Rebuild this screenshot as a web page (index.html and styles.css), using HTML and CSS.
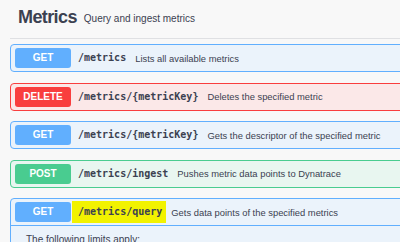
FILE: index.html
```html
<!DOCTYPE html>
<html lang="en">
<head>
  <meta charset="UTF-8" />
  <title>Metrics API</title>
  <link rel="stylesheet" href="styles.css">
</head>
<body>
  <div class="tag">
    <span class="tag-name">Metrics</span>
    <span class="tag-desc">Query and ingest metrics</span>
  </div>

  <div class="ops">
    <div class="op op-get">
      <div class="op-head">
        <span class="method">GET</span>
        <span class="path">/metrics</span>
        <span class="summary">Lists all available metrics</span>
      </div>
    </div>

    <div class="op op-delete">
      <div class="op-head">
        <span class="method">DELETE</span>
        <span class="path">/metrics/{metricKey}</span>
        <span class="summary">Deletes the specified metric</span>
      </div>
    </div>

    <div class="op op-get">
      <div class="op-head">
        <span class="method">GET</span>
        <span class="path">/metrics/{metricKey}</span>
        <span class="summary">Gets the descriptor of the specified metric</span>
      </div>
    </div>

    <div class="op op-post">
      <div class="op-head">
        <span class="method">POST</span>
        <span class="path">/metrics/ingest</span>
        <span class="summary">Pushes metric data points to Dynatrace</span>
      </div>
    </div>

    <div class="op op-get open">
      <div class="op-head">
        <span class="method">GET</span>
        <span class="path highlight">/metrics/query</span>
        <span class="summary">Gets data points of the specified metrics</span>
      </div>
      <div class="op-body">
        <p>The following limits apply:</p>
      </div>
    </div>
  </div>
</body>
</html>
```

FILE: styles.css
```css
body {
  margin: 0;
  background: #f8f8f8;
  font-family: 'Liberation Sans', Arial, sans-serif;
  color: #3b4151;
  overflow: hidden;
}

.tag {
  display: flex;
  align-items: center;
  margin: 0 0 5px 10px;
  padding: 6px 8px 10px;
  border-bottom: 1px solid #dfe0e3;
}

.tag-name {
  font-size: 18px;
  line-height: 22px;
  font-weight: bold;
  letter-spacing: -0.6px;
}

.tag-desc {
  font-size: 10px;
  margin-left: 7px;
  margin-top: 2px;
}

.ops {
  margin: 0 -10px 0 10px;
}

.op {
  border: 1px solid;
  border-radius: 4px;
  margin-bottom: 10.5px;
}

.op-head {
  display: flex;
  align-items: center;
  height: 26px;
  padding: 0 4px;
}

.method {
  width: 56px;
  height: 20px;
  line-height: 20px;
  text-align: center;
  color: #fff;
  font-size: 10px;
  font-weight: bold;
  border-radius: 3px;
}

.path {
  font-family: 'DejaVu Sans Mono', monospace;
  font-size: 10px;
  font-weight: bold;
  padding: 0 4px 0 6px;
  margin-left: 1px;
  height: 22px;
  line-height: 22px;
  color: #3b4151;
}

.highlight {
  background: #f2f200;
}

.summary {
  font-size: 9.4px;
  margin-left: 5px;
}

.op-get {
  background: #ebf3fb;
  border-color: #61affe;
}

.op-get .method {
  background: #61affe;
}

.op-delete {
  background: #fbe8e8;
  border-color: #f93e3e;
}

.op-delete .method {
  background: #f93e3e;
}

.op-post {
  background: #e8f6f0;
  border-color: #49cc90;
}

.op-post .method {
  background: #49cc90;
}

.op.open .op-head {
  border-bottom: 1px solid #61affe;
}

.op-body {
  padding: 8px 15px;
}

.op-body p {
  margin: 0;
  font-size: 10px;
}
```
